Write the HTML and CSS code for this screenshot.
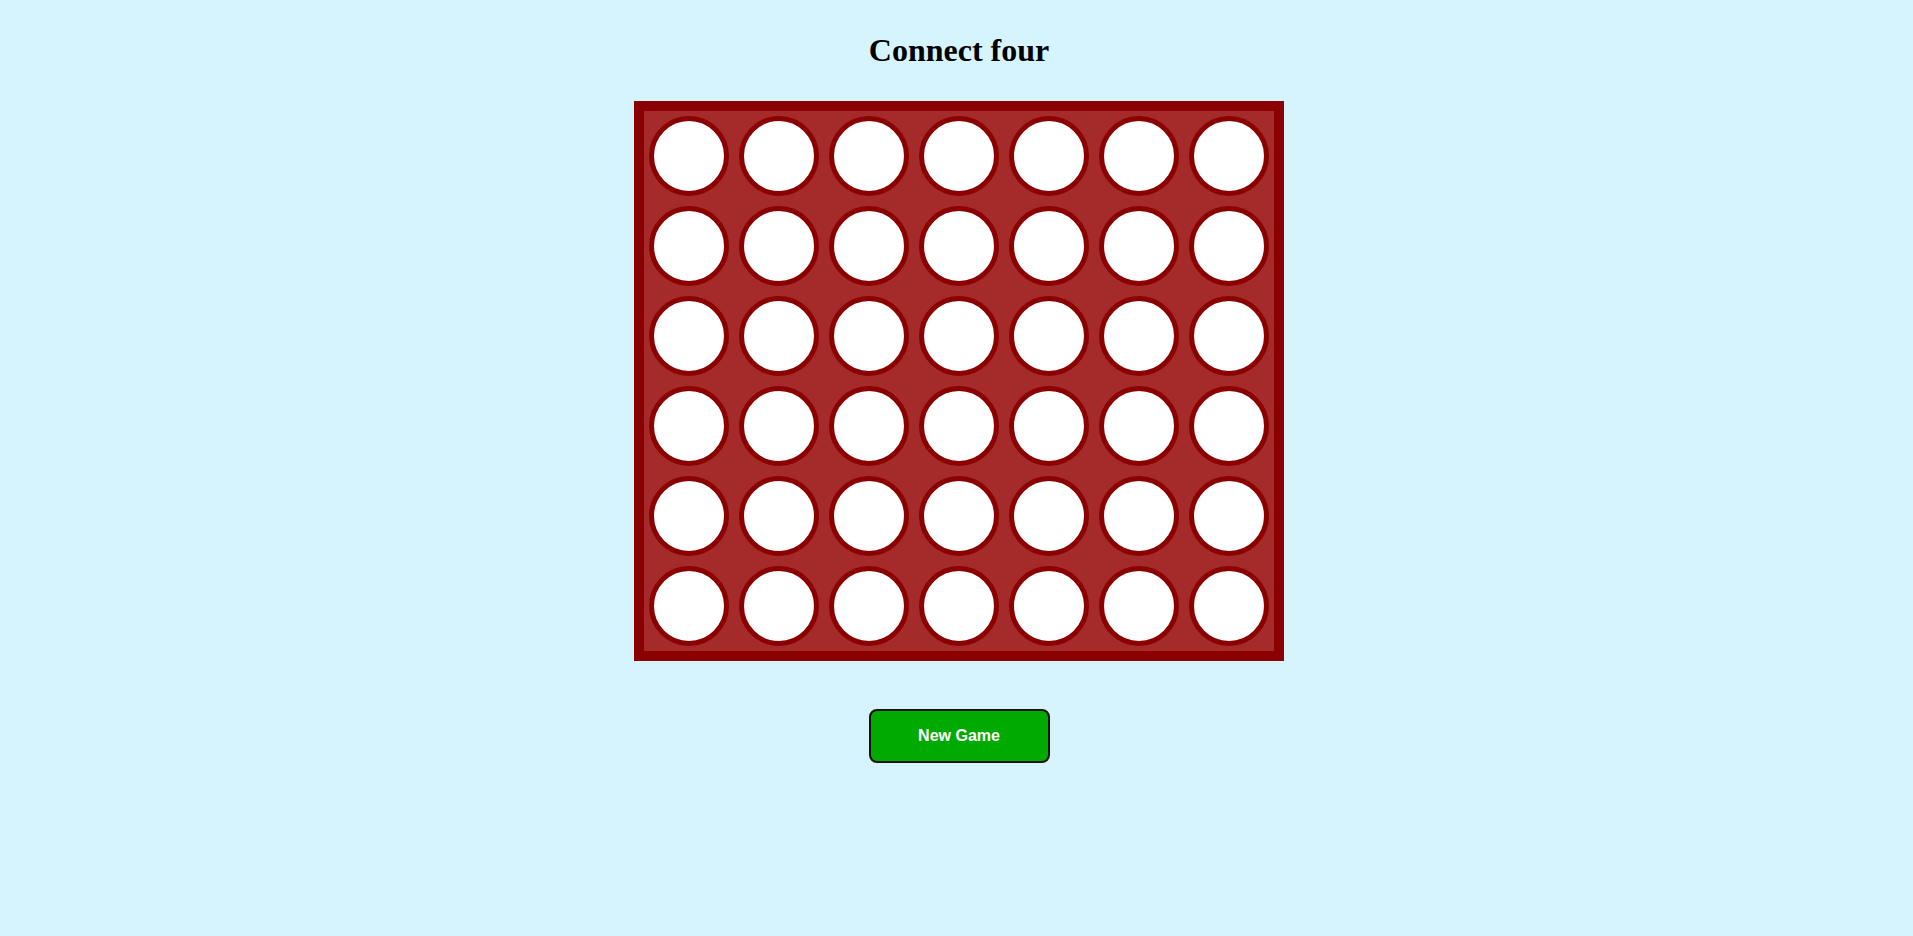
FILE: index.html
```html
<!DOCTYPE html>
<html lang="en">
<head>
<meta charset="utf-8">
<title>Connect four</title>
<link rel="stylesheet" href="styles.css">
</head>
<body>
<main class="app">
  <h1 class="title">Connect four</h1>
  <div class="board">
    <div class="cell"></div><div class="cell"></div><div class="cell"></div><div class="cell"></div><div class="cell"></div><div class="cell"></div><div class="cell"></div>
    <div class="cell"></div><div class="cell"></div><div class="cell"></div><div class="cell"></div><div class="cell"></div><div class="cell"></div><div class="cell"></div>
    <div class="cell"></div><div class="cell"></div><div class="cell"></div><div class="cell"></div><div class="cell"></div><div class="cell"></div><div class="cell"></div>
    <div class="cell"></div><div class="cell"></div><div class="cell"></div><div class="cell"></div><div class="cell"></div><div class="cell"></div><div class="cell"></div>
    <div class="cell"></div><div class="cell"></div><div class="cell"></div><div class="cell"></div><div class="cell"></div><div class="cell"></div><div class="cell"></div>
    <div class="cell"></div><div class="cell"></div><div class="cell"></div><div class="cell"></div><div class="cell"></div><div class="cell"></div><div class="cell"></div>
  </div>
  <button class="new-game" type="button">New Game</button>
</main>
</body>
</html>
```
FILE: styles.css
```css
html, body {
  margin: 0;
  padding: 0;
  background: #d6f4fe;
  min-height: 100%;
}

body {
  font-family: "Liberation Serif", "Times New Roman", serif;
}

.app {
  display: flex;
  flex-direction: column;
  align-items: center;
  padding-left: 5px;
}

.title {
  margin: 32px 0 32px;
  font-family: "Liberation Serif", "Times New Roman", serif;
  font-size: 32px;
  line-height: 37px;
  font-weight: bold;
  color: #000;
}

.board {
  display: grid;
  grid-template-columns: repeat(7, 80px);
  grid-auto-rows: 80px;
  gap: 10px;
  padding: 5px;
  border: 10px solid #8b0000;
  background: #a52a2a;
}

.cell {
  box-sizing: border-box;
  width: 80px;
  height: 80px;
  border: 5px solid #8b0000;
  border-radius: 50%;
  background: #ffffff;
}

.new-game {
  margin-top: 48px;
  box-sizing: border-box;
  width: 181px;
  height: 54px;
  border: 2px solid #111;
  border-radius: 8px;
  background: #00aa00;
  color: #fff;
  font-family: "Liberation Sans", Arial, sans-serif;
  font-weight: bold;
  font-size: 16px;
  cursor: pointer;
}
```
